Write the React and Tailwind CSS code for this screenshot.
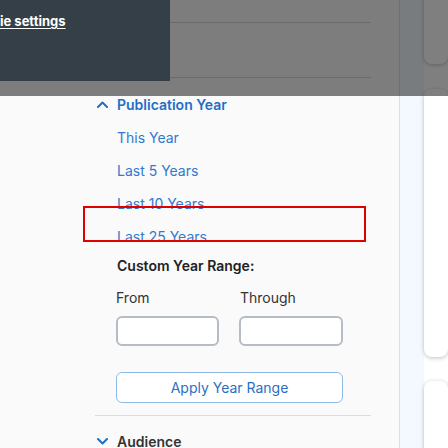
function Chevron({ up }) {
  return (
    <svg width="11" height="7" viewBox="0 0 11 7" fill="none" className="shrink-0">
      <path
        d={up ? "M1 6L5.5 1.5L10 6" : "M1 1L5.5 5.5L10 1"}
        stroke="#1f6fc5"
        strokeWidth="2"
        strokeLinecap="round"
        strokeLinejoin="round"
      />
    </svg>
  );
}

export default function App() {
  const ranges = ["This Year", "Last 5 Years", "Last 10 Years", "Last 25 Years"];

  return (
    <div className="relative flex w-[448px] h-[448px] overflow-hidden font-['Inter',sans-serif] text-[14px]">
      <aside className="w-[400px] shrink-0 bg-[#fafafa] border-r border-[#d3e2ec]">
        <div className="ml-[95px] w-[276px]">
          {/* earlier facets, under the overlay */}
          <div className="h-[22px]" />
          <div className="h-[55px] border-t border-[#d6d6d6]" />
          <div className="h-[19px] border-t border-[#d6d6d6]" />

          <div className="flex items-center h-[16px] pl-[2px] gap-[9px] font-semibold text-[#1f6fc5]">
            <Chevron up />
            <span>Publication Year</span>
          </div>
          <ul className="mt-[9px] pl-[22px]">
            {ranges.map((r) => (
              <li key={r} className="h-[33px] flex items-center text-[#3179cf]">
                {r}
              </li>
            ))}
          </ul>

          <div className="h-[24px] flex items-center pl-[22px] font-semibold text-[#222]">
            Custom Year Range:
          </div>
          <div className="mt-[10px] h-[20px] pl-[21px] flex gap-[20px] text-[#333]">
            <span className="w-[103px]">From</span>
            <span className="w-[103px] pl-[1px]">Through</span>
          </div>
          <div className="mt-[9px] pl-[21px] flex gap-[20px]">
            <input className="w-[103px] h-[30px] border-2 border-[#b5bcc6] rounded-md bg-white" />
            <input className="w-[104px] h-[30px] border-2 border-[#b5bcc6] rounded-md bg-white" />
          </div>
          <div className="mt-[26px] pl-[21px]">
            <button className="w-[227px] h-[31px] border border-[#8dbbe5] rounded-md bg-white text-[#2a6fc5]">
              Apply Year Range
            </button>
          </div>

          <div className="mt-[12px] border-t border-[#dddddd]" />
          <div className="h-[50px] flex items-center pl-[2px] gap-[9px] font-semibold text-[#333]">
            <Chevron />
            <span>Audience</span>
          </div>
        </div>
      </aside>

      <div className="w-[24px] shrink-0 bg-[#f3f9fe]" />

      <div className="flex-1 flex flex-col">
        <div className="-mt-[20px] h-[84px] shrink-0 bg-white rounded-lg shadow-[0_1px_4px_rgba(0,0,0,0.25)]" />
        <div className="mt-[25px] h-[268px] shrink-0 bg-white rounded-lg shadow-[0_1px_4px_rgba(0,0,0,0.25)]" />
        <div className="mt-[24px] h-[120px] shrink-0 bg-white rounded-lg shadow-[0_1px_4px_rgba(0,0,0,0.25)]" />
      </div>

      {/* highlight box */}
      <div className="absolute left-[83px] top-[206px] w-[283px] h-[36px] border-2 border-[#e00000]" />

      {/* modal backdrop */}
      <div className="absolute left-0 top-0 w-full h-[96px] bg-black/50" />
      <div className="absolute left-0 top-0 w-[170px] h-[81px] bg-[#343f48]">
        <a className="absolute left-0 top-[12px] text-[13px] font-bold text-white underline underline-offset-2">
          ie settings
        </a>
      </div>
    </div>
  );
}
